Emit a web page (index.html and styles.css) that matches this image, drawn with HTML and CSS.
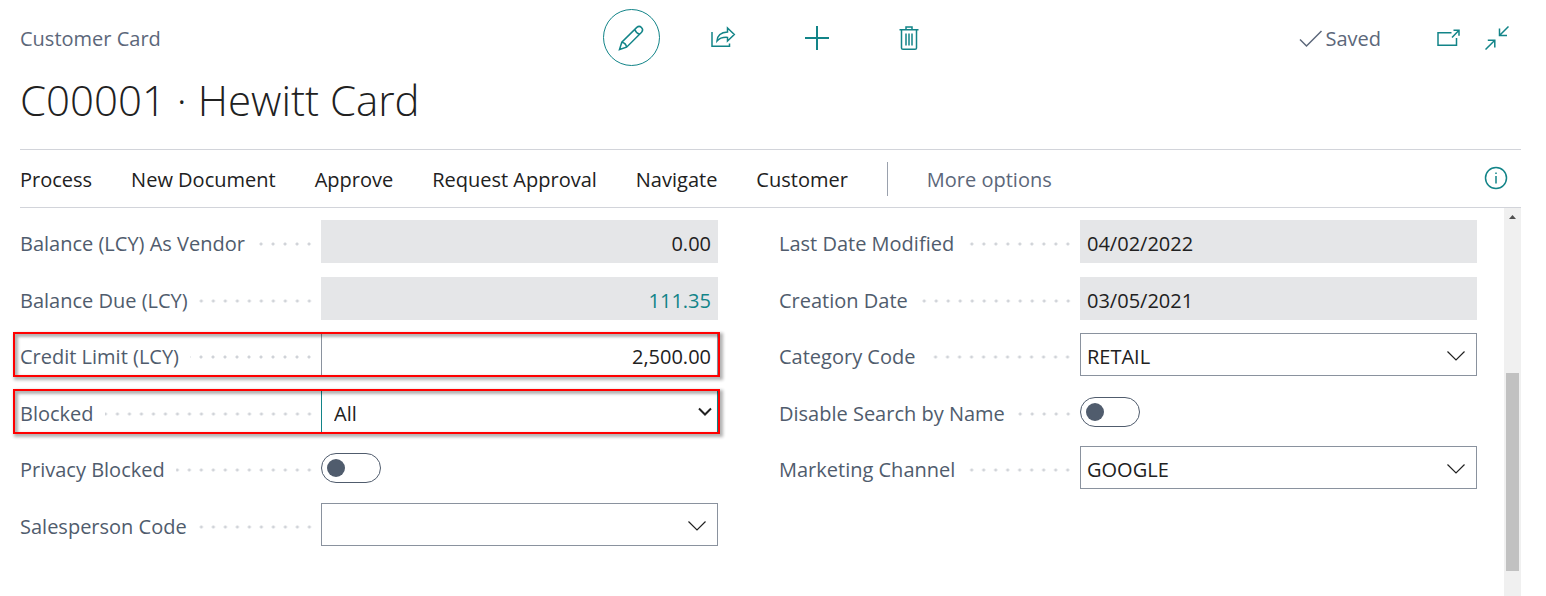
FILE: index.html
```html
<!DOCTYPE html>
<html lang="en">
<head>
<meta charset="utf-8">
<meta name="viewport" content="width=device-width, initial-scale=1">
<title>Customer Card</title>
<link rel="stylesheet" href="styles.css">
</head>
<body>
<div class="page">
  <header class="header">
    <div class="header-row">
      <p class="caption">Customer Card</p>
      <div class="actions">
        <button class="action action-active" type="button" aria-label="Edit">
          <svg width="28" height="28" viewBox="0 0 28 28"><path d="M2.500 25.500 L4.800 18.200 L19.800 3.400 A3.400 3.400 0 0 1 24.600 8.200 L9.600 23.200 Z M4.800 18.200 Q9 19 9.600 23.200 M17.800 5.400 Q19 9 22.600 10.200"/></svg>
        </button>
        <button class="action" type="button" aria-label="Share">
          <svg width="28" height="28" viewBox="1 0 28 28"><path d="M3 8 V22.300 H20.500 V19.500 M8 17 Q8.500 8.500 18.500 8 V4 L25.300 10.500 L18.500 17 V13.400 Q11.500 13 8 17 Z"/></svg>
        </button>
        <button class="action" type="button" aria-label="New">
          <svg width="28" height="28" viewBox="0 0 28 28"><path stroke-width="2" d="M14 2 V26 M2 14 H26"/></svg>
        </button>
        <button class="action" type="button" aria-label="Delete">
          <svg width="28" height="28" viewBox="1 0 28 28"><path d="M4.500 5.800 H23.500 M11 5.500 V3 H17 V5.500 M6.500 6 V24 Q6.500 25.300 8 25.300 H20 Q21.500 25.300 21.500 24 V6 M11 9.500 V21.500 M14 9.500 V21.500 M17 9.500 V21.500"/></svg>
        </button>
      </div>
      <div class="status">
        <span class="saved"><svg width="24" height="24" viewBox="0 0 24 24"><path d="M1 12.500 L7.500 19 L22.500 4"/></svg>Saved</span>
        <button class="icon-button" type="button" aria-label="Open in new window">
          <svg width="24" height="24" viewBox="0 0 24 24"><path d="M15.500 6.700 H2 V19.300 H20.500 V12 M16 11.500 L23 4.200 M17.500 4.200 H23 V9.800"/></svg>
        </button>
        <button class="icon-button" type="button" aria-label="Collapse page">
          <svg width="24" height="24" viewBox="0 0 24 24"><path d="M23.500 0.500 L14.500 9.500 M14.500 2.500 V9.500 H22 M0.500 23.500 L9.800 14.300 M2.800 14.300 H9.800 V21.500"/></svg>
        </button>
      </div>
    </div>
    <h1 class="title">C00001 · Hewitt Card</h1>
  </header>

  <nav class="toolbar" aria-label="Actions">
    <button class="menu" type="button">Process</button>
    <button class="menu" type="button">New Document</button>
    <button class="menu" type="button">Approve</button>
    <button class="menu" type="button">Request Approval</button>
    <button class="menu" type="button">Navigate</button>
    <button class="menu" type="button">Customer</button>
    <span class="divider"></span>
    <button class="menu menu-more" type="button">More options</button>
    <button class="icon-button info" type="button" aria-label="Details">
      <svg width="24" height="24" viewBox="0 0 24 24"><circle cx="12" cy="12" r="10.500"/><path d="M12 10 V17.500 M12 6.500 V8"/></svg>
    </button>
  </nav>

  <main class="body">
    <form class="form">
      <div class="column">
        <div class="field">
          <label class="label" for="vendor-balance">Balance (LCY) As Vendor</label>
          <input class="value readonly number" id="vendor-balance" value="0.00" readonly>
        </div>
        <div class="field">
          <label class="label" for="balance-due">Balance Due (LCY)</label>
          <input class="value readonly number drilldown" id="balance-due" value="111.35" readonly>
        </div>
        <div class="field highlight">
          <label class="label" for="credit-limit">Credit Limit (LCY)</label>
          <input class="value number" id="credit-limit" value="2,500.00">
        </div>
        <div class="field highlight">
          <label class="label" for="blocked">Blocked</label>
          <div class="control">
            <select class="value select" id="blocked"><option>All</option></select>
            <svg class="select-arrow" width="14" height="10" viewBox="0 0 14 10"><path d="M1 1.500 L7 7.500 L13 1.500"/></svg>
          </div>
        </div>
        <div class="field">
          <label class="label" for="privacy">Privacy Blocked</label>
          <input class="toggle" type="checkbox" role="switch" id="privacy">
        </div>
        <div class="field">
          <label class="label" for="salesperson">Salesperson Code</label>
          <div class="control">
            <input class="value" id="salesperson" value="">
            <button class="lookup" type="button" aria-label="Look up salesperson"><svg width="18" height="10" viewBox="0 0 18 10"><path d="M0.500 0.500 L9 9 L17.500 0.500"/></svg></button>
          </div>
        </div>
      </div>
      <div class="column">
        <div class="field">
          <label class="label" for="modified">Last Date Modified</label>
          <input class="value readonly" id="modified" value="04/02/2022" readonly>
        </div>
        <div class="field">
          <label class="label" for="created">Creation Date</label>
          <input class="value readonly" id="created" value="03/05/2021" readonly>
        </div>
        <div class="field">
          <label class="label" for="category">Category Code</label>
          <div class="control">
            <input class="value" id="category" value="RETAIL">
            <button class="lookup" type="button" aria-label="Look up category"><svg width="18" height="10" viewBox="0 0 18 10"><path d="M0.500 0.500 L9 9 L17.500 0.500"/></svg></button>
          </div>
        </div>
        <div class="field">
          <label class="label" for="disable-search">Disable Search by Name</label>
          <input class="toggle" type="checkbox" role="switch" id="disable-search">
        </div>
        <div class="field">
          <label class="label" for="channel">Marketing Channel</label>
          <div class="control">
            <input class="value" id="channel" value="GOOGLE">
            <button class="lookup" type="button" aria-label="Look up channel"><svg width="18" height="10" viewBox="0 0 18 10"><path d="M0.500 0.500 L9 9 L17.500 0.500"/></svg></button>
          </div>
        </div>
      </div>
    </form>
    <div class="scrollbar" aria-hidden="true">
      <span class="scroll-up"></span>
      <span class="scroll-thumb"></span>
    </div>
  </main>
</div>
</body>
</html>
```
FILE: styles.css
```css
* {
  box-sizing: border-box;
}

body {
  margin: 0;
  background: #fff;
  color: #212121;
  font: 20px/28px "Open Sans", "Noto Sans", sans-serif;
}

button,
input,
select {
  font: inherit;
  color: inherit;
  margin: 0;
}

button {
  padding: 0;
  border: 0;
  background: none;
}

svg {
  display: block;
  flex: none;
  fill: none;
  stroke: currentColor;
  stroke-width: 1.5;
}

.page {
  display: flex;
  flex-direction: column;
  min-height: 100vh;
  padding: 0 25px 0 20px;
}

/* Header */
.header {
  padding: 9px 0 19px;
}

.header-row {
  display: grid;
  grid-template-columns: 1fr auto 1fr;
  align-items: center;
}

.caption {
  margin: 0;
  padding-top: 2px;
  color: #5c677a;
}

.actions {
  display: flex;
  gap: 36px;
}

.action {
  display: flex;
  align-items: center;
  justify-content: center;
  width: 57px;
  height: 57px;
  border-radius: 50%;
  color: #128488;
}

.action-active {
  border: 1px solid #128488;
}

.status {
  display: flex;
  align-items: center;
  justify-content: flex-end;
  gap: 25px;
  padding-right: 12px;
}

.saved {
  display: flex;
  align-items: center;
  gap: 2px;
  padding-top: 2px;
  margin-right: 30px;
  color: #5c677a;
}

.icon-button {
  color: #128488;
}

.title {
  margin: 4px 0 0;
  font-size: 42px;
  line-height: 60px;
  font-weight: 300;
}

/* Action bar */
.toolbar {
  display: flex;
  align-items: center;
  gap: 39px;
  min-height: 59px;
  padding-right: 13px;
  border: solid #d2d4da;
  border-width: 1px 0;
}

.menu {
  padding-top: 2px;
  white-space: nowrap;
}

.menu-more {
  color: #5c677a;
}

.divider {
  width: 1px;
  height: 34px;
  background: #9aa1ad;
}

.info {
  margin-left: auto;
  padding-bottom: 2px;
}

/* Fields */
.body {
  display: flex;
  flex: 1;
}

.form {
  display: grid;
  grid-template-columns: 1fr 1fr;
  gap: 61px;
  flex: 1;
  padding: 12px 27px 20px 0;
}

.field {
  position: relative;
  display: grid;
  grid-template-columns: 301px 1fr;
  align-items: center;
  height: 43px;
  margin-bottom: 13px;
}

.field:nth-child(odd) {
  margin-bottom: 14px;
}

.label {
  display: flex;
  align-items: center;
  gap: 11px;
  padding: 4px 6px 0 0;
  color: #505c6d;
  white-space: nowrap;
}

.label::after {
  content: "";
  flex: 1;
  height: 12px;
  background: radial-gradient(circle, #d0d3d8 1px, transparent 2px) right center / 12px 12px repeat-x;
}

.control {
  display: grid;
  position: relative;
}

.value {
  width: 100%;
  min-width: 0;
  height: 43px;
  padding: 4px 6px 0;
  border: 1px solid #8a929e;
  border-radius: 0;
  background: #fff;
}

.readonly {
  border-color: #e5e6e8;
  background: #e5e6e8;
}

.number {
  text-align: right;
}

.drilldown {
  color: #128488;
}

.select {
  appearance: none;
  padding-left: 12px;
  border-color: #128488;
}

.select-arrow {
  position: absolute;
  top: 17px;
  right: 6px;
  stroke-width: 2;
  pointer-events: none;
}

.lookup {
  position: absolute;
  top: 18px;
  right: 12px;
}

.lookup svg {
  stroke-width: 1.2;
}

.toggle {
  appearance: none;
  display: flex;
  align-items: center;
  width: 60px;
  height: 30px;
  padding: 0 5px;
  border: 1px solid #505c6d;
  border-radius: 15px;
}

.toggle::before {
  content: "";
  width: 18px;
  height: 18px;
  border-radius: 50%;
  background: #505c6d;
}

.toggle:checked {
  justify-content: flex-end;
}

.highlight::after {
  content: "";
  position: absolute;
  inset: -1px -2px -1px -7px;
  border: 2px solid #f00;
  box-shadow: 2px 2px 3px 1px rgba(0, 0, 0, 0.3), inset 2px 2px 3px 1px rgba(0, 0, 0, 0.3);
  pointer-events: none;
}

/* Scrollbar */
.scrollbar {
  display: grid;
  grid-template-rows: 165fr 198fr 25fr;
  width: 17px;
  padding: 0 2px;
  background: #f0f0f0;
}

.scroll-up {
  width: 7px;
  height: 4px;
  margin: 7px 3px 0;
  background: #505050;
  clip-path: polygon(50% 0, 100% 100%, 0 100%);
}

.scroll-thumb {
  background: #c1c1c1;
}

@media (max-width: 1200px) {
  .form {
    grid-template-columns: 1fr;
    gap: 0;
  }

  .toolbar {
    flex-wrap: wrap;
    gap: 12px 24px;
  }
}
```
